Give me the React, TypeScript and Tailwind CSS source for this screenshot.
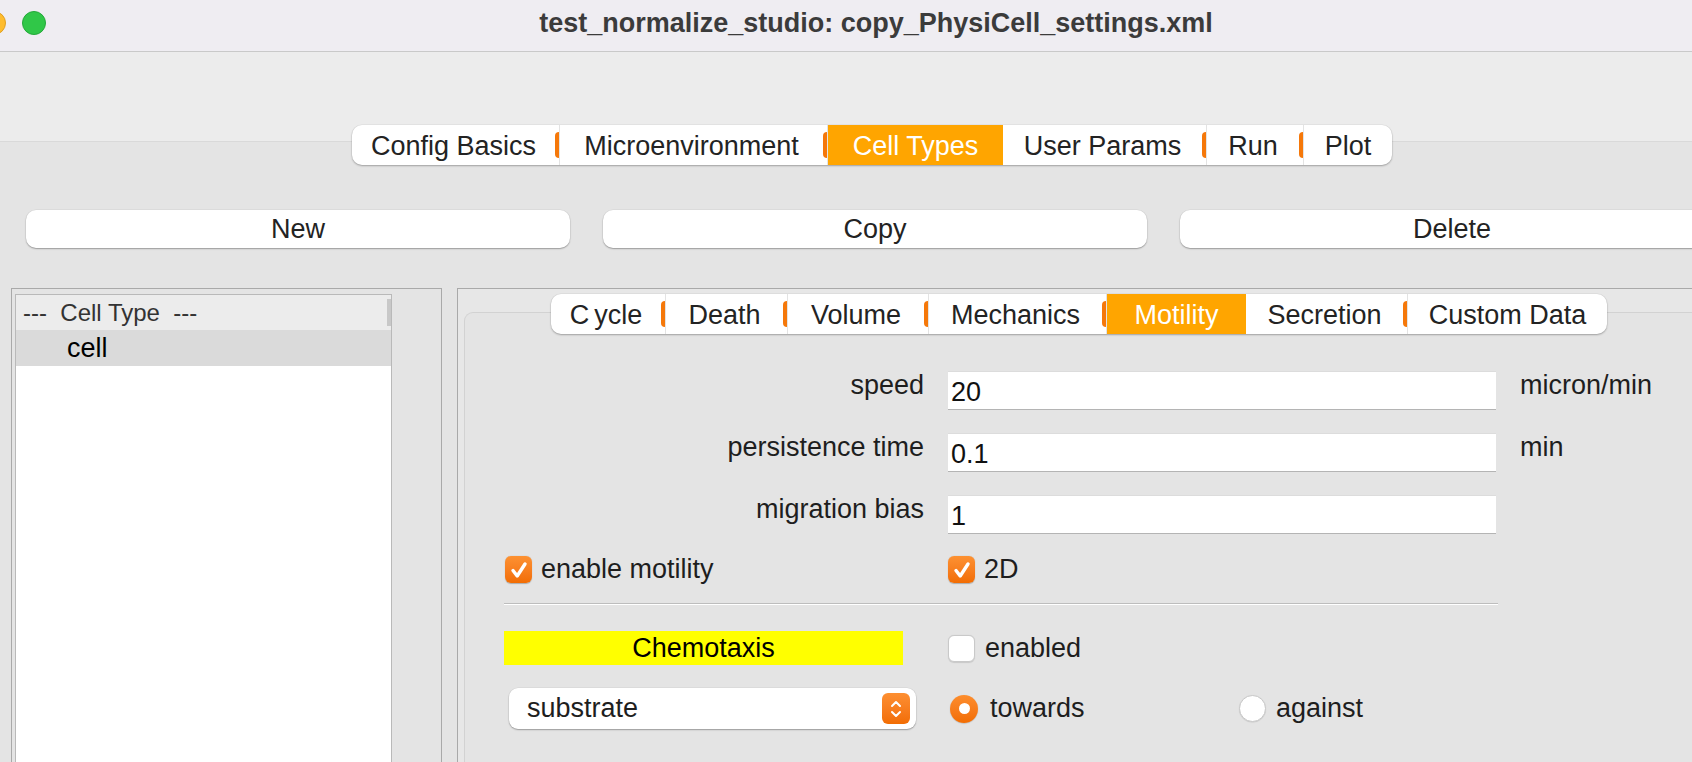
import React from "react";

const ORANGE_SEP = "w-[4px] h-[26px] rounded-l-full bg-[#f5780a]";

type Tab = { label: React.ReactNode; w: number; selected?: boolean };

function TabBar({ tabs }: { tabs: Tab[] }) {
  return (
    <div className="flex h-[40px] bg-white rounded-[10px] shadow-[0_1px_2px_rgba(0,0,0,0.28),0_0_0_0.5px_rgba(0,0,0,0.06)] overflow-hidden">
      {tabs.map((t, i) => {
        const showSep = !t.selected && i < tabs.length - 1;
        return (
          <div
            key={i}
            className={
              "flex items-center h-full shrink-0 " +
              (t.selected ? "bg-[#ffa500] text-white" : "text-[#232323]")
            }
            style={{ width: t.w }}
          >
            <div className="flex-1 text-center text-[27px] leading-none whitespace-pre pt-[2px]">{t.label}</div>
            {showSep && (
              <div className="flex items-center h-full">
                <div className={ORANGE_SEP} />
                <div className="w-[1px] h-full bg-[#e3e3e3]" />
              </div>
            )}
          </div>
        );
      })}
    </div>
  );
}

function Check({ checked }: { checked: boolean }) {
  if (!checked)
    return (
      <div className="w-[27px] h-[27px] shrink-0 rounded-[6px] bg-white border border-[#c9c9c9] shadow-[0_0.5px_1px_rgba(0,0,0,0.12)]" />
    );
  return (
    <div className="w-[27px] h-[27px] shrink-0 rounded-[6px] bg-gradient-to-b from-[#fd9131] to-[#f26d02] flex items-center justify-center shadow-[0_0.5px_1px_rgba(0,0,0,0.25)]">
      <svg width="22" height="22" viewBox="0 0 22 22">
        <path d="M5 11.5 L9.2 17 L17 5" fill="none" stroke="white" strokeWidth="3.4" strokeLinecap="round" strokeLinejoin="round" />
      </svg>
    </div>
  );
}

function Radio({ checked }: { checked: boolean }) {
  if (checked)
    return (
      <div className="w-[28px] h-[28px] shrink-0 rounded-full bg-gradient-to-b from-[#fd8d2c] to-[#f26d02] flex items-center justify-center shadow-[0_0.5px_1px_rgba(0,0,0,0.25)]">
        <div className="w-[11px] h-[11px] rounded-full bg-white" />
      </div>
    );
  return (
    <div className="w-[27px] h-[27px] shrink-0 rounded-full bg-white border border-[#c8c8c8] shadow-[0_0.5px_1px_rgba(0,0,0,0.12)]" />
  );
}

function Field({ value }: { value: string }) {
  return (
    <div className="h-[38px] bg-white border-t border-[#dcdcdc] shadow-[0_1px_0_#b4b4b4] flex items-center pl-[3px] pt-[4px] text-[27px] text-[#111]">
      {value}
    </div>
  );
}

export default function App() {
  const mainTabs: Tab[] = [
    { label: "Config Basics", w: 208 },
    { label: "Microenvironment", w: 268 },
    { label: "Cell Types", w: 175, selected: true },
    { label: "User Params", w: 204 },
    { label: "Run", w: 97 },
    { label: "Plot", w: 88 },
  ];
  const subTabs: Tab[] = [
    {
      label: (
        <span>
          C<span className="ml-[5px]">ycle</span>
        </span>
      ),
      w: 115,
    },
    { label: "Death", w: 122 },
    { label: "Volume", w: 141 },
    { label: "Mechanics", w: 178 },
    { label: "Motility", w: 139, selected: true },
    { label: "Secretion", w: 162 },
    { label: "Custom Data", w: 199 },
  ];

  return (
    <div className="w-[1692px] h-[762px] overflow-hidden bg-[#e4e4e4] font-['Liberation_Sans',Arial,sans-serif] text-[#1e1e1e]">
      {/* Title bar */}
      <div className="grid h-[52px] bg-[#efedf2] border-b border-[#c9c9c9]">
        <div className="col-start-1 row-start-1 flex items-start pt-[11px] ml-[-18px] gap-[16px]">
          <div className="w-[24px] h-[24px] rounded-full bg-[#febc2e] border border-[#dfa023]" />
          <div className="w-[24px] h-[24px] rounded-full bg-[#30c748] border border-[#24a83a]" />
        </div>
        <div className="col-start-1 row-start-1 w-[1752px] flex justify-center pt-[8px] text-[27px] leading-[30px] font-bold text-[#3b3b3b]">
          test_normalize_studio: copy_PhysiCell_settings.xml
        </div>
      </div>

      {/* Toolbar area */}
      <div className="h-[90px] bg-[#ececec] border-b border-[#d9d9d9]" />

      {/* Main tabs */}
      <div className="relative -mt-[17px] w-[1744px] flex justify-center">
        <TabBar tabs={mainTabs} />
      </div>

      {/* Buttons */}
      <div className="mt-[45px] pl-[26px] flex gap-[33px]">
        {["New", "Copy", "Delete"].map((b) => (
          <div
            key={b}
            className="w-[544px] shrink-0 h-[38px] bg-white rounded-[10px] shadow-[0_1px_1.5px_rgba(0,0,0,0.3),0_0_0_0.5px_rgba(0,0,0,0.06)] flex items-center justify-center text-[27px] text-[#232323]"
          >
            {b}
          </div>
        ))}
      </div>

      {/* Panels */}
      <div className="mt-[40px] flex">
        {/* Left panel */}
        <div className="ml-[11px] w-[431px] h-[480px] shrink-0 border border-[#a9a9a9] pl-[3px] pt-[5px]">
          <div className="w-[377px] h-full bg-white border border-b-0 border-[#b9b9b9]">
            <div className="h-[35px] bg-[#ececec] flex items-center justify-between pl-[7px]">
              <span className="text-[24px] text-[#333] whitespace-pre">---  Cell Type  ---</span>
              <div className="w-[4px] h-[27px] bg-[#c8c8c8] self-end mb-[4px]" />
            </div>
            <div className="h-[36px] bg-[#dadada] flex items-center pl-[51px] text-[27px] text-black">cell</div>
          </div>
        </div>

        {/* Right panel */}
        <div className="ml-[15px] flex-1 h-[480px] border-t border-l border-[#a9a9a9] bg-[#e7e7e7] pl-[6px] pt-[5px]">
          <div className="relative z-10 ml-[87px] w-fit">
            <TabBar tabs={subTabs} />
          </div>
          <div className="-mt-[22px] h-[500px] border border-r-0 border-[#d2d2d2] rounded-tl-[9px] bg-[#e4e4e4] pt-[58px] pl-[39px]">
            {/* Fields */}
            <div className="grid grid-cols-[420px_548px_auto] gap-x-[24px] gap-y-[24px] items-start">
              <div className="text-right text-[27px] leading-[30px] -mt-[1px]">speed</div>
              <Field value="20" />
              <div className="text-[27px] leading-[30px] -mt-[1px]">micron/min</div>

              <div className="text-right text-[27px] leading-[30px] -mt-[1px]">persistence time</div>
              <Field value="0.1" />
              <div className="text-[27px] leading-[30px] -mt-[1px]">min</div>

              <div className="text-right text-[27px] leading-[30px] -mt-[1px]">migration bias</div>
              <Field value="1" />
              <div />
            </div>

            {/* Checkboxes */}
            <div className="mt-[23px] flex items-center h-[27px]">
              <div className="w-[444px] flex items-center pl-[1px] gap-[9px]">
                <Check checked />
                <span className="text-[27px] leading-none">enable motility</span>
              </div>
              <div className="flex items-center gap-[9px]">
                <Check checked />
                <span className="text-[27px] leading-none">2D</span>
              </div>
            </div>

            {/* Separator */}
            <div className="mt-[20px] w-[994px] h-[2px] border-t border-[#bdbdbd] border-b border-b-white" />

            {/* Chemotaxis */}
            <div className="mt-[26px] flex items-center">
              <div className="w-[399px] h-[34px] bg-[#ffff00] flex items-center justify-center text-[27px] text-black">
                Chemotaxis
              </div>
              <div className="ml-[45px] flex items-center gap-[10px]">
                <Check checked={false} />
                <span className="text-[27px] leading-none">enabled</span>
              </div>
            </div>

            {/* Combo + radios */}
            <div className="mt-[23px] flex items-center">
              <div className="ml-[5px] w-[407px] h-[41px] bg-white rounded-[9px] shadow-[0_1px_1.5px_rgba(0,0,0,0.3),0_0_0_0.5px_rgba(0,0,0,0.06)] flex items-center justify-between pl-[18px] pr-[6px]">
                <span className="text-[27px] text-[#1e1e1e]">substrate</span>
                <div className="w-[28px] h-[31px] rounded-[6px] bg-gradient-to-b from-[#fd8f31] to-[#f26d02] flex items-center justify-center">
                  <svg width="14" height="22" viewBox="0 0 14 22">
                    <path d="M3 8 L7 4 L11 8" fill="none" stroke="white" strokeWidth="2" strokeLinecap="round" strokeLinejoin="round" />
                    <path d="M3 14 L7 18 L11 14" fill="none" stroke="white" strokeWidth="2" strokeLinecap="round" strokeLinejoin="round" />
                  </svg>
                </div>
              </div>
              <div className="ml-[34px] w-[289px] flex items-center gap-[12px]">
                <Radio checked />
                <span className="text-[27px] leading-none">towards</span>
              </div>
              <div className="flex items-center gap-[10px]">
                <Radio checked={false} />
                <span className="text-[27px] leading-none">against</span>
              </div>
            </div>
          </div>
        </div>
      </div>
    </div>
  );
}
